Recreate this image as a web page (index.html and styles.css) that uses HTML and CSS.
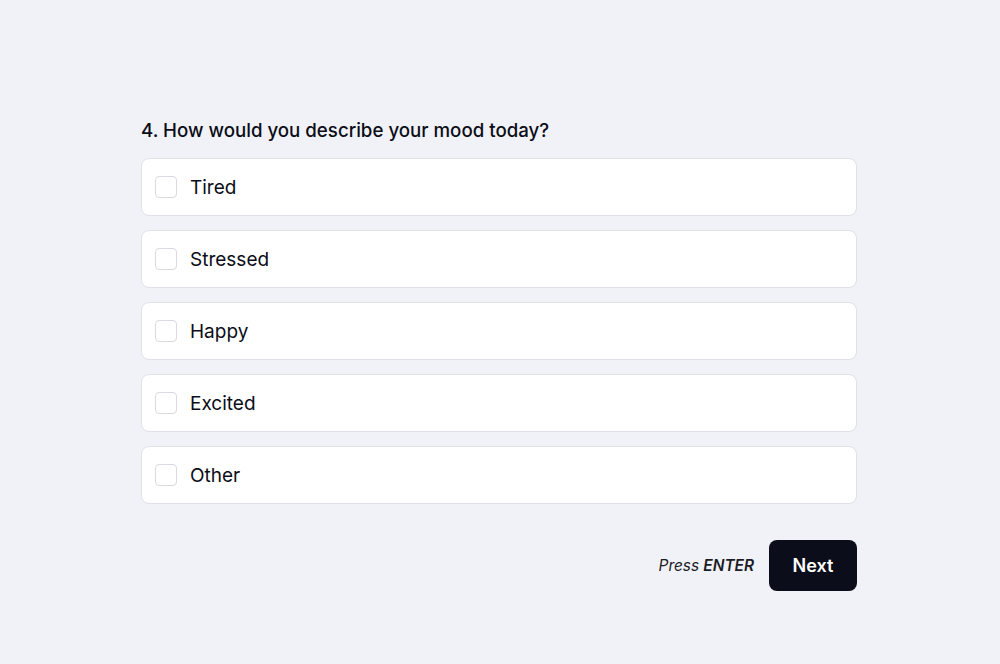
FILE: index.html
```html
<!DOCTYPE html>
<html>
<head>
<meta charset="utf-8">
<link rel="stylesheet" href="styles.css">
</head>
<body>
<main class="survey">
  <h2 class="question">4. How would you describe your mood today?</h2>
  <div class="options">
    <label class="option"><span class="box"></span><span class="label">Tired</span></label>
    <label class="option"><span class="box"></span><span class="label">Stressed</span></label>
    <label class="option"><span class="box"></span><span class="label">Happy</span></label>
    <label class="option"><span class="box"></span><span class="label">Excited</span></label>
    <label class="option"><span class="box"></span><span class="label">Other</span></label>
  </div>
  <div class="actions">
    <span class="hint">Press <b>ENTER</b></span>
    <button class="next">Next</button>
  </div>
</main>
</body>
</html>
```
FILE: styles.css
```css
html, body {
  margin: 0;
  padding: 0;
  background: #f1f2f7;
  font-family: Inter, "Noto Sans", sans-serif;
  color: #0b0d17;
}
.survey {
  width: 716px;
  margin: 0 0 0 141px;
  padding-top: 119px;
}
.question {
  margin: 0 0 15px 0;
  font-size: 18.7px;
  line-height: 24px;
  font-weight: 500;
}
.options {
  display: flex;
  flex-direction: column;
  gap: 14px;
}
.option {
  display: flex;
  align-items: center;
  height: 56px;
  background: #fff;
  border: 1px solid #dfe1e8;
  border-radius: 8px;
  padding: 0 13px;
}
.box {
  width: 20px;
  height: 20px;
  border: 1px solid #d9dbe2;
  border-radius: 4px;
  background: #fff;
  flex: none;
}
.label {
  margin-left: 13px;
  font-size: 19px;
  font-weight: 400;
}
.actions {
  display: flex;
  justify-content: flex-end;
  align-items: center;
  gap: 15px;
  margin-top: 36px;
}
.hint {
  font-size: 15.4px;
  font-style: italic;
  color: #1a1c26;
}
.hint b {
  font-weight: 600;
}
.next {
  width: 88px;
  height: 51px;
  border: none;
  border-radius: 8px;
  background: #0b0d1a;
  color: #fff;
  font-family: Inter, "Noto Sans", sans-serif;
  font-size: 18px;
  font-weight: 600;
}
```
